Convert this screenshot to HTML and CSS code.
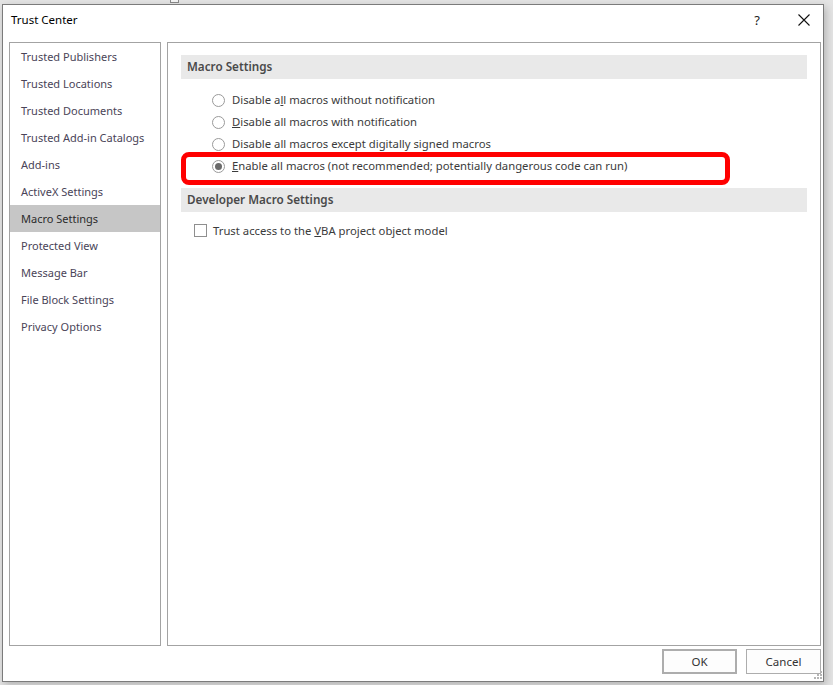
FILE: index.html
```html
<!DOCTYPE html>
<html>
<head>
<meta charset="utf-8">
<title>Trust Center</title>
<link rel="stylesheet" href="styles.css">
</head>
<body>
<div class="behind"></div>
<div class="window">
  <div class="titlebar">
    <span class="title">Trust Center</span>
    <span class="tb-help">?</span>
    <span class="tb-close">
      <svg width="12" height="12" viewBox="0 0 12 12"><path d="M0.5 0.5 L11.5 11.5 M11.5 0.5 L0.5 11.5" stroke="#111" stroke-width="1.1" fill="none"/></svg>
    </span>
  </div>
  <div class="panels">
    <div class="nav">
      <div class="nav-item">Trusted Publishers</div>
      <div class="nav-item">Trusted Locations</div>
      <div class="nav-item">Trusted Documents</div>
      <div class="nav-item">Trusted Add-in Catalogs</div>
      <div class="nav-item">Add-ins</div>
      <div class="nav-item">ActiveX Settings</div>
      <div class="nav-item selected">Macro Settings</div>
      <div class="nav-item">Protected View</div>
      <div class="nav-item">Message Bar</div>
      <div class="nav-item">File Block Settings</div>
      <div class="nav-item">Privacy Options</div>
    </div>
    <div class="content">
      <div class="section-header">Macro Settings</div>
      <div class="options">
        <div class="option"><span class="radio"></span><span class="label">Disable a<u>l</u>l macros without notification</span></div>
        <div class="option"><span class="radio"></span><span class="label"><u>D</u>isable all macros with notification</span></div>
        <div class="option"><span class="radio"></span><span class="label">Disable all macros except digitally signed macros</span></div>
        <div class="option highlighted"><span class="radio checked"></span><span class="label"><u>E</u>nable all macros (not recommended; potentially dangerous code can run)</span></div>
      </div>
      <div class="section-header dev">Developer Macro Settings</div>
      <div class="check-row"><span class="checkbox"></span><span class="label">Trust access to the <u>V</u>BA project object model</span></div>
    </div>
  </div>
  <div class="footer">
    <button class="btn default">OK</button>
    <button class="btn">Cancel</button>
  </div>
  <svg class="grip" width="10" height="10" viewBox="0 0 10 10">
    <g fill="#b5b5b5">
      <rect x="7" y="1" width="2" height="2"/>
      <rect x="4" y="4" width="2" height="2"/><rect x="7" y="4" width="2" height="2"/>
      <rect x="1" y="7" width="2" height="2"/><rect x="4" y="7" width="2" height="2"/><rect x="7" y="7" width="2" height="2"/>
    </g>
  </svg>
</div>
</body>
</html>
```
FILE: styles.css
```css
*, *::before, *::after { box-sizing: border-box; }
html, body { margin: 0; padding: 0; }
body {
  background: #e4e4e4;
  width: 833px;
  height: 685px;
  overflow: hidden;
  position: relative;
  font-family: "Segoe UI", "Noto Sans", "Open Sans", sans-serif;
  font-size: 11.3px;
  color: #333;
}
.behind {
  position: absolute;
  left: 170px;
  top: -6px;
  width: 9px;
  height: 9px;
  border: 1px solid #8a8a8a;
  background: #f4f4f4;
}
.window {
  position: relative;
  margin: 4px 0 0 2px;
  width: 822px;
  height: 678px;
  background: #fff;
  border: 1px solid #7b7b7b;
  box-shadow: 2px 3px 8px rgba(0,0,0,0.22);
  display: flex;
  flex-direction: column;
}
.titlebar {
  height: 37px;
  display: flex;
  align-items: center;
  padding: 0 0 8px 8px;
  color: #000;
}
.title { flex: 1; font-size: 11.5px; }
.tb-help { width: 14px; margin-right: 34px; font-size: 13px; color: #222; text-align: center; }
.tb-close { width: 12px; height: 12px; margin-right: 13px; display: flex; }
.panels {
  display: flex;
  gap: 6px;
  padding: 0 2px 0 6px;
  height: 604px;
}
.nav {
  width: 152px;
  border: 1px solid #a3a3a3;
}
.nav-item {
  height: 27px;
  line-height: 27px;
  padding-left: 11px;
  color: #4a4458;
  white-space: nowrap;
  font-size: 11px;
}
.nav-item.selected { background: #c6c6c6; color: #2b2b2b; }
.content {
  flex: 1;
  border: 1px solid #a3a3a3;
  padding: 12px 13px 0 13px;
}
.section-header {
  height: 24px;
  line-height: 22px;
  background: #e9e9e9;
  padding-left: 6px;
  font-weight: 600;
  color: #4a4a4a;
  font-size: 11.7px;
}
.section-header.dev { margin-top: 11px; }
.options { margin-top: 10px; padding-left: 31px; }
.option {
  position: relative;
  height: 22px;
  display: flex;
  align-items: center;
  color: #3b3b3b;
}
.option .label { position: relative; top: -1px; }
.radio {
  width: 13px;
  height: 13px;
  border: 1px solid #9a9a9a;
  border-radius: 50%;
  margin-right: 7px;
  display: flex;
  align-items: center;
  justify-content: center;
  background: #fff;
}
.radio.checked::before {
  content: "";
  width: 7px;
  height: 7px;
  border-radius: 50%;
  background: #6a6a6a;
}
.highlighted::after {
  content: "";
  position: absolute;
  left: -31px;
  top: -3px;
  width: 549px;
  height: 33px;
  border: 5px solid #ff0000;
  border-radius: 8px;
}
.check-row {
  margin-top: 7px;
  padding-left: 13px;
  height: 23px;
  display: flex;
  align-items: center;
  color: #3b3b3b;
}
.checkbox {
  width: 13px;
  height: 13px;
  border: 1px solid #8f8f8f;
  margin-right: 6px;
  background: #fff;
}
.footer {
  flex: 1;
  display: flex;
  justify-content: flex-end;
  align-items: flex-start;
  gap: 9px;
  padding: 3px 2px 0 0;
}
.btn {
  width: 75px;
  height: 25px;
  border: 1px solid #adadad;
  background: #fdfdfd;
  font-family: inherit;
  font-size: 11.5px;
  color: #333;
  padding: 0;
}
.btn.default { border: 2px solid #adadad; }
.grip {
  position: absolute;
  right: 0;
  bottom: 1px;
}
```
